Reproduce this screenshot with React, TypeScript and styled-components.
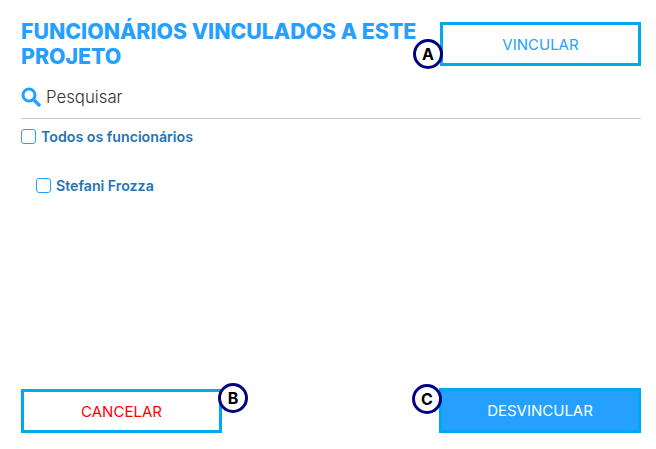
import React from "react";
import styled, { createGlobalStyle } from "styled-components";

const GlobalStyle = createGlobalStyle`
  html, body {
    margin: 0;
    padding: 0;
    background: #fff;
  }
  body {
    font-family: "Inter", "Liberation Sans", sans-serif;
  }
`;

const Page = styled.div`
  width: 656px;
  height: 449px;
  box-sizing: border-box;
  padding: 19px 15px 16px 21px;
  display: flex;
  flex-direction: column;
  overflow: hidden;
`;

const Header = styled.div`
  display: flex;
  justify-content: space-between;
  align-items: flex-start;
`;

const Title = styled.h1`
  margin: 0;
  width: 410px;
  font-size: 21.3px;
  line-height: 25px;
  font-weight: 800;
  color: #26a0ff;
  white-space: pre-line;
`;

const Button = styled.button<{ $tone: "outline" | "danger" | "solid" }>`
  position: relative;
  box-sizing: border-box;
  width: 201px;
  height: 44px;
  padding: 0;
  border: 3px solid #00a8ec;
  font-family: inherit;
  font-size: 15px;
  font-weight: 400;
  background: ${({ $tone }) => ($tone === "solid" ? "#26a0ff" : "#fff")};
  color: ${({ $tone }) =>
    $tone === "solid" ? "#fff" : $tone === "danger" ? "#ff0000" : "#26a0ff"};
`;

const TopButton = styled(Button)`
  margin-top: 3px;
`;

const Badge = styled.span<{ $side: "left" | "right"; $top: number }>`
  position: absolute;
  top: ${({ $top }) => $top}px;
  ${({ $side }) => ($side === "left" ? "left: -30px;" : "right: -29px;")}
  box-sizing: border-box;
  width: 30px;
  height: 30px;
  border: 3px solid #000080;
  border-radius: 50%;
  background: #fff;
  color: #000;
  font-size: 16px;
  font-weight: 700;
  line-height: 24px;
  text-align: center;
`;

const SearchRow = styled.div`
  display: flex;
  align-items: center;
  gap: 5px;
  height: 33px;
  margin-top: 11px;
  border-bottom: 1px solid #cccccc;
  padding-bottom: 5px;
`;

const SearchLabel = styled.span`
  font-size: 16.8px;
  font-weight: 300;
  color: #333333;
`;

const List = styled.div`
  display: flex;
  flex-direction: column;
  gap: 32px;
  margin-top: 9px;
  flex: 1;
`;

const Row = styled.label<{ $indent?: boolean }>`
  display: flex;
  align-items: center;
  gap: 5px;
  height: 17px;
  padding-left: ${({ $indent }) => ($indent ? "15px" : "0")};
  font-size: 14.2px;
  font-weight: 600;
  color: #1f74b4;
`;

const Box = styled.span`
  box-sizing: border-box;
  width: 15px;
  height: 15px;
  border: 1px solid #26a0ff;
  border-radius: 3px;
  background: #fff;
`;

const Footer = styled.div`
  display: flex;
  justify-content: space-between;
  align-items: flex-end;
`;

const SolidButton = styled(Button)`
  width: 202px;
  height: 45px;
`;

const SearchIcon = () => (
  <svg width="20" height="20" viewBox="0 0 20 20" fill="none">
    <circle cx="8" cy="8" r="6" stroke="#26a0ff" strokeWidth="3" />
    <path d="M12.5 12.5L18 18" stroke="#26a0ff" strokeWidth="3.4" strokeLinecap="round" />
  </svg>
);

export default function App() {
  return (
    <Page>
      <GlobalStyle />
      <Header>
        <Title>{"FUNCIONÁRIOS VINCULADOS A ESTE\nPROJETO"}</Title>
        <TopButton $tone="outline">
          VINCULAR
          <Badge $side="left" $top={14}>A</Badge>
        </TopButton>
      </Header>
      <SearchRow>
        <SearchIcon />
        <SearchLabel>Pesquisar</SearchLabel>
      </SearchRow>
      <List>
        <Row>
          <Box />
          Todos os funcionários
        </Row>
        <Row $indent>
          <Box />
          Stefani Frozza
        </Row>
      </List>
      <Footer>
        <Button $tone="danger">
          CANCELAR
          <Badge $side="right" $top={-9}>B</Badge>
        </Button>
        <SolidButton $tone="solid">
          DESVINCULAR
          <Badge $side="left" $top={-7}>C</Badge>
        </SolidButton>
      </Footer>
    </Page>
  );
}
